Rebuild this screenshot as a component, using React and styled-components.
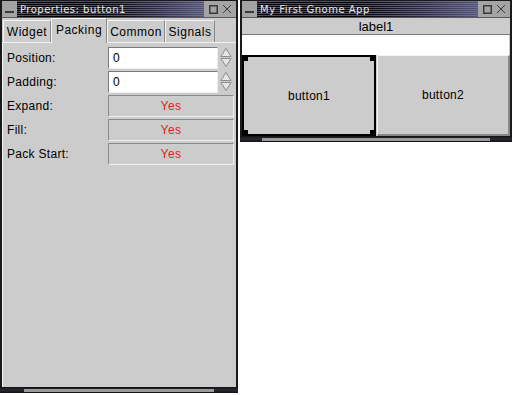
import React from "react";
import styled, { createGlobalStyle } from "styled-components";

const GlobalStyle = createGlobalStyle`
    html, body {
        margin: 0;
        padding: 0;
        background: #ffffff;
    }
    body {
        font-family: "Liberation Sans", Arial, sans-serif;
        font-size: 12px;
        color: #000;
    }
`;

const Desktop = styled.div`
    display: flex;
    align-items: flex-start;
    gap: 2px;
    width: 514px;
    height: 395px;
`;

const Window = styled.div`
    display: flex;
    flex-direction: column;
    width: ${(p) => p.$width}px;
    height: ${(p) => p.$height}px;
    background: #cccccc;
    border-left: 2px solid #1a1a1a;
    border-right: 2px solid #1a1a1a;
    border-top: 1px solid #1a1a1a;
    box-sizing: border-box;
`;

const TitleBar = styled.div`
    display: flex;
    align-items: stretch;
    height: 16px;
    background: #9a9a9a;
    border-bottom: 1px solid #5a5a5a;
    flex-shrink: 0;
`;

const TitleButton = styled.div`
    display: flex;
    align-items: center;
    justify-content: center;
    width: 15px;
    background: #a4a4a4;
`;

const TitleText = styled.div`
    flex: 1;
    display: flex;
    align-items: center;
    padding-left: 3px;
    font-family: "DejaVu Sans", sans-serif;
    font-size: 10px;
    letter-spacing: 0.5px;
    color: #e8e8e8;
    background:
        repeating-linear-gradient(
            to bottom,
            rgba(130, 130, 160, 0.6) 0px,
            rgba(130, 130, 160, 0.6) 1px,
            rgba(0, 0, 0, 0) 1px,
            rgba(0, 0, 0, 0) 2px
        ),
        linear-gradient(to right, #000 0%, #000 45%, #2a2a40 75%, #55557a 100%);
    background-repeat: no-repeat;
`;

const TitleControls = styled.div`
    display: flex;
    align-items: center;
    gap: 4px;
    padding: 0 4px 0 5px;
    background: #a4a4a4;
`;

const Dash = () => (
    <svg width="9" height="9" viewBox="0 0 9 9">
        <rect x="0" y="6" width="9" height="2" fill="#3a3a3a" />
    </svg>
);

const MaxIcon = () => (
    <svg width="9" height="9" viewBox="0 0 9 9">
        <rect x="0.75" y="0.75" width="7.5" height="7.5" fill="none" stroke="#3a3a3a" strokeWidth="1.5" />
    </svg>
);

const CloseIcon = () => (
    <svg width="10" height="10" viewBox="0 0 10 10">
        <path d="M1 1 L9 9 M9 1 L1 9" stroke="#3a3a3a" strokeWidth="1" fill="none" />
    </svg>
);

const WindowTitle = ({ children }) => (
    <TitleBar>
        <TitleButton>
            <Dash />
        </TitleButton>
        <TitleText>{children}</TitleText>
        <TitleControls>
            <MaxIcon />
            <CloseIcon />
        </TitleControls>
    </TitleBar>
);

const BottomBar = styled.div`
    display: flex;
    align-items: center;
    height: 6px;
    padding: 0 ${(p) => p.$inset}px;
    background: linear-gradient(to bottom, #111 0%, #2a2a33 50%, #111 100%);
    flex-shrink: 0;
    margin: 0 -2px;
`;

const Handle = styled.div`
    flex: 1;
    height: 3px;
    background: #9a9a9a;
`;

/* ---------- properties window ---------- */

const Notebook = styled.div`
    flex: 1;
    display: flex;
    flex-direction: column;
`;

const TabRow = styled.div`
    display: flex;
    align-items: flex-end;
    height: 24px;
    padding-left: 1px;
    border-bottom: 1px solid #f2f2f2;
`;

const Tab = styled.div`
    display: flex;
    align-items: center;
    justify-content: center;
    width: ${(p) => p.$w}px;
    height: ${(p) => (p.$active ? 25 : 22)}px;
    margin-bottom: ${(p) => (p.$active ? -1 : 0)}px;
    box-sizing: border-box;
    border-left: 1px solid #f2f2f2;
    border-top: 1px solid #f2f2f2;
    border-right: 1px solid #8a8a8a;
    background: #cccccc;
    font-size: 12px;
    letter-spacing: 0.5px;
    padding-bottom: ${(p) => (p.$active ? 3 : 0)}px;
`;

const Panel = styled.div`
    flex: 1;
    display: flex;
    flex-direction: column;
    gap: 3px;
    padding: 4px 2px 0 4px;
    border-left: 1px solid #f2f2f2;
`;

const Row = styled.div`
    display: flex;
    align-items: center;
    height: 21px;
`;

const Label = styled.div`
    width: 102px;
    font-size: 12px;
    letter-spacing: 0.3px;
`;

const Entry = styled.div`
    display: flex;
    align-items: center;
    width: 111px;
    height: 22px;
    box-sizing: border-box;
    padding-left: 4px;
    background: #ffffff;
    border-top: 1px solid #7a7a7a;
    border-left: 1px solid #7a7a7a;
    border-bottom: 1px solid #eeeeee;
    border-right: 1px solid #eeeeee;
    font-size: 12px;
`;

const Spin = styled.div`
    display: flex;
    align-items: center;
    justify-content: center;
    width: 16px;
`;

const SpinArrows = () => (
    <svg width="12" height="21" viewBox="0 0 12 21">
        <path d="M6 1.5 L11 9.5 L1 9.5 Z" fill="#e6e6e6" stroke="#8c8c8c" strokeWidth="1" />
        <path d="M6 19.5 L11 11.5 L1 11.5 Z" fill="#e6e6e6" stroke="#8c8c8c" strokeWidth="1" />
    </svg>
);

const Toggle = styled.div`
    display: flex;
    align-items: center;
    justify-content: center;
    width: 127px;
    height: 22px;
    box-sizing: border-box;
    border-top: 1px solid #8a8a8a;
    border-left: 1px solid #8a8a8a;
    border-bottom: 1px solid #f0f0f0;
    border-right: 1px solid #f0f0f0;
    color: #e02020;
    font-size: 12px;
    letter-spacing: 0.5px;
`;

/* ---------- gnome app window ---------- */

const LabelBar = styled.div`
    display: flex;
    align-items: center;
    justify-content: center;
    height: 16px;
    font-size: 13px;
    border-bottom: 1px solid #777;
`;

const TextField = styled.div`
    height: 20px;
    background: #ffffff;
    margin-right: 1px;
`;

const ButtonRow = styled.div`
    flex: 1;
    display: flex;
`;

const AppButton = styled.div`
    position: relative;
    flex: 1;
    display: flex;
    align-items: center;
    justify-content: center;
    box-sizing: border-box;
    font-size: 12px;
    letter-spacing: 0.3px;
    ${(p) =>
        p.$selected
            ? `
        border: 2px solid #000;
        margin-right: 1px;
    `
            : `
        border-top: 1px solid #f4f4f4;
        border-left: 1px solid #f4f4f4;
        border-right: 2px solid #888;
        border-bottom: 2px solid #888;
    `}
`;

const Grip = styled.span`
    position: absolute;
    width: 6px;
    height: 6px;
    background: #000;
    ${(p) => (p.$top ? "top: -2px;" : "bottom: -2px;")}
    ${(p) => (p.$left ? "left: -2px;" : "right: -2px;")}
`;

export default function App() {
    return (
        <>
            <GlobalStyle />
            <Desktop>
                <Window $width={238} $height={393}>
                    <WindowTitle>Properties: button1</WindowTitle>
                    <Notebook>
                        <TabRow>
                            <Tab $w={48}>Widget</Tab>
                            <Tab $w={56} $active>
                                Packing
                            </Tab>
                            <Tab $w={58}>Common</Tab>
                            <Tab $w={50}>Signals</Tab>
                        </TabRow>
                        <Panel>
                            <Row>
                                <Label>Position:</Label>
                                <Entry>0</Entry>
                                <Spin>
                                    <SpinArrows />
                                </Spin>
                            </Row>
                            <Row>
                                <Label>Padding:</Label>
                                <Entry>0</Entry>
                                <Spin>
                                    <SpinArrows />
                                </Spin>
                            </Row>
                            <Row>
                                <Label>Expand:</Label>
                                <Toggle>Yes</Toggle>
                            </Row>
                            <Row>
                                <Label>Fill:</Label>
                                <Toggle>Yes</Toggle>
                            </Row>
                            <Row>
                                <Label>Pack Start:</Label>
                                <Toggle>Yes</Toggle>
                            </Row>
                        </Panel>
                    </Notebook>
                    <BottomBar $inset={24}>
                        <Handle />
                    </BottomBar>
                </Window>

                <Window $width={272} $height={142}>
                    <WindowTitle>My First Gnome App</WindowTitle>
                    <LabelBar>label1</LabelBar>
                    <TextField />
                    <ButtonRow>
                        <AppButton $selected>
                            button1
                            <Grip $top $left />
                            <Grip $top />
                            <Grip $left />
                            <Grip />
                        </AppButton>
                        <AppButton>button2</AppButton>
                    </ButtonRow>
                    <BottomBar $inset={22}>
                        <Handle />
                    </BottomBar>
                </Window>
            </Desktop>
        </>
    );
}
